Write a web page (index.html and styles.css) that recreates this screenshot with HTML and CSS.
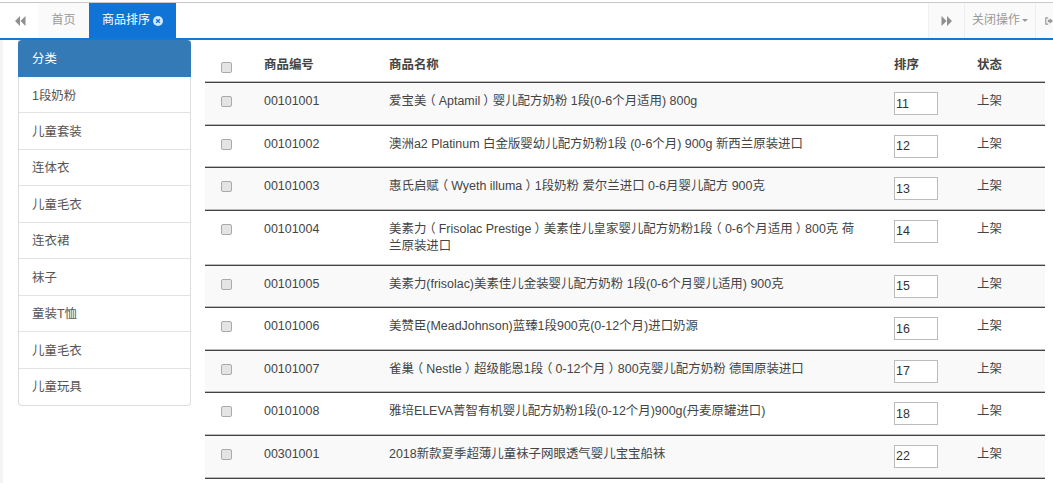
FILE: index.html
```html
<!DOCTYPE html>
<html lang="zh">
<head>
<meta charset="utf-8">
<title>商品排序</title>
<link rel="stylesheet" href="styles.css">
</head>
<body>
<header class="tabbar">
  <button class="tb-btn tb-left"><svg width="12" height="10" viewBox="0 0 12 10"><path d="M6 0v10L1 5zM11.500 0v10L6.500 5z" fill="#8f8f8f"/></svg></button>
  <a class="tab">首页</a>
  <a class="tab tab-active">商品排序<svg class="tab-close" width="10" height="10" viewBox="0 0 10 10"><circle cx="5" cy="5" r="5" fill="#d6e6f5"/><path d="M3.200 3.200l3.600 3.600M6.800 3.200l-3.600 3.600" stroke="#0f74d6" stroke-width="1.400"/></svg></a>
  <div class="tab-spacer"></div>
  <button class="tb-btn tb-right"><svg width="12" height="10" viewBox="0 0 12 10"><path d="M0.500 0v10L5.500 5zM6 0v10l5-5z" fill="#8f8f8f"/></svg></button>
  <button class="tb-btn tb-close">关闭操作<span class="caret"></span></button>
  <button class="tb-btn tb-exit"><svg width="10" height="10" viewBox="0 0 10 10"><path d="M4 1H1v8h3" fill="none" stroke="#999" stroke-width="1.500"/><path d="M3.500 3.500H6V1.500L10 5 6 8.500v-2H3.500z" fill="#999"/></svg></button>
</header>
<main class="content">
  <nav class="side">
    <div class="side-head">分类</div>
    <a class="side-item">1段奶粉</a>
    <a class="side-item">儿童套装</a>
    <a class="side-item">连体衣</a>
    <a class="side-item">儿童毛衣</a>
    <a class="side-item">连衣裙</a>
    <a class="side-item">袜子</a>
    <a class="side-item">童装T恤</a>
    <a class="side-item">儿童毛衣</a>
    <a class="side-item">儿童玩具</a>
  </nav>
  <table class="goods">
    <colgroup><col class="c-check"><col class="c-code"><col class="c-name"><col class="c-sort"><col class="c-state"></colgroup>
    <thead>
      <tr><th class="cell-check"><input type="checkbox"></th><th>商品编号</th><th>商品名称</th><th>排序</th><th>状态</th></tr>
    </thead>
    <tbody>
      <tr class="odd"><td class="cell-check"><input type="checkbox"></td><td>00101001</td><td class="cell-name">爱宝美<span class="fw">（</span>Aptamil<span class="fw">）</span>婴儿配方奶粉 1段(0-6个月适用) 800g</td><td class="cell-sort"><input class="sort" type="text" value="11"></td><td>上架</td></tr>
      <tr><td class="cell-check"><input type="checkbox"></td><td>00101002</td><td class="cell-name">澳洲a2 Platinum 白金版婴幼儿配方奶粉1段 (0-6个月) 900g 新西兰原装进口</td><td class="cell-sort"><input class="sort" type="text" value="12"></td><td>上架</td></tr>
      <tr class="odd"><td class="cell-check"><input type="checkbox"></td><td>00101003</td><td class="cell-name">惠氏启赋<span class="fw">（</span>Wyeth illuma<span class="fw">）</span>1段奶粉 爱尔兰进口 0-6月婴儿配方 900克</td><td class="cell-sort"><input class="sort" type="text" value="13"></td><td>上架</td></tr>
      <tr><td class="cell-check"><input type="checkbox"></td><td>00101004</td><td class="cell-name cell-wrap">美素力<span class="fw">（</span>Frisolac Prestige<span class="fw">）</span>美素佳儿皇家婴儿配方奶粉1段<span class="fw">（</span>0-6个月适用<span class="fw">）</span>800克 荷兰原装进口</td><td class="cell-sort"><input class="sort" type="text" value="14"></td><td>上架</td></tr>
      <tr class="odd"><td class="cell-check"><input type="checkbox"></td><td>00101005</td><td class="cell-name">美素力(frisolac)美素佳儿金装婴儿配方奶粉 1段(0-6个月婴儿适用) 900克</td><td class="cell-sort"><input class="sort" type="text" value="15"></td><td>上架</td></tr>
      <tr><td class="cell-check"><input type="checkbox"></td><td>00101006</td><td class="cell-name">美赞臣(MeadJohnson)蓝臻1段900克(0-12个月)进口奶源</td><td class="cell-sort"><input class="sort" type="text" value="16"></td><td>上架</td></tr>
      <tr class="odd"><td class="cell-check"><input type="checkbox"></td><td>00101007</td><td class="cell-name">雀巢<span class="fw">（</span>Nestle<span class="fw">）</span>超级能恩1段<span class="fw">（</span>0-12个月<span class="fw">）</span>800克婴儿配方奶粉 德国原装进口</td><td class="cell-sort"><input class="sort" type="text" value="17"></td><td>上架</td></tr>
      <tr><td class="cell-check"><input type="checkbox"></td><td>00101008</td><td class="cell-name">雅培ELEVA菁智有机婴儿配方奶粉1段(0-12个月)900g(丹麦原罐进口)</td><td class="cell-sort"><input class="sort" type="text" value="18"></td><td>上架</td></tr>
      <tr class="odd row-last"><td class="cell-check"><input type="checkbox"></td><td>00301001</td><td class="cell-name">2018新款夏季超薄儿童袜子网眼透气婴儿宝宝船袜</td><td class="cell-sort"><input class="sort" type="text" value="22"></td><td>上架</td></tr>
    </tbody>
  </table>
</main>
</body>
</html>
```
FILE: styles.css
```css
* { box-sizing: border-box; }
html, body { margin: 0; padding: 0; height: 483px; overflow: hidden; background: #fff; }
body {
  font-family: "Liberation Sans", "Noto Sans CJK SC", sans-serif;
  font-size: 12.450px;
  line-height: 17px;
  color: #555;
  padding-top: 2px;
}
.tabbar {
  display: flex;
  height: 38px;
  background: #fafafa;
  border-top: 1px solid #c8c8c8;
  border-bottom: 2px solid #1377d4;
  align-items: stretch;
}
.tb-btn {
  border: 0;
  background: #fafafa;
  padding: 0;
  font: inherit;
  color: #999;
  display: flex;
  align-items: center;
  justify-content: center;
}
.tb-left { width: 38px; background: #fff; padding-left: 1px; }
.tb-right { width: 36px; border-left: 1px solid #f0f0f0; }
.tb-close { width: 71px; border-left: 1px solid #eee; font-size: 12px; }
.tb-exit { width: 18px; border-left: 1px solid #eee; justify-content: flex-start; padding-left: 9px; }
.tab {
  width: 51px;
  color: #999;
  display: flex;
  align-items: center;
  justify-content: center;
  background: #fafafa;
  font-size: 12px;
}
.tab-active {
  width: 87px;
  color: #fff;
  background: #0f74d6;
  justify-content: flex-start;
  padding-left: 13px;
}
.tab-close { margin-left: 3px; }
.tab-spacer { flex: 1; background: #fff; }
.caret {
  width: 0; height: 0;
  margin-left: 2px;
  border-left: 3px solid transparent;
  border-right: 3px solid transparent;
  border-top: 3px solid #999;
}
.content {
  display: flex;
  align-items: flex-start;
  padding: 0 8px 0 15px;
  border-left: 3px solid #f4f4f4;
  height: 443px;
}
.side {
  width: 173px;
  display: flex;
  flex-direction: column;
  border: 1px solid #ddd;
  border-top: 0;
  border-radius: 0 0 4px 4px;
  background: #fff;
}
.side-head {
  margin: 0 -1px;
  height: 37px;
  padding: 11px 14px;
  color: #fff;
  background: #337ab7;
  border-radius: 4px 4px 0 0;
}
.side-item {
  height: 36.440px;
  padding: 10.500px 13px 0;
  color: #555;
  border-bottom: 1px solid #e2e2e2;
}
.side-item:last-child { border-bottom: 0; }
.goods {
  margin-left: 14px;
  width: 840px;
  table-layout: fixed;
  border-collapse: separate;
  border-spacing: 0;
  color: #444;
}
.c-check { width: 51px; }
.c-code { width: 125px; }
.c-name { width: 505px; }
.c-sort { width: 83px; }
.c-state { width: 76px; }
.goods th {
  height: 43px;
  padding: 17px 8px 0;
  vertical-align: top;
  text-align: left;
  font-weight: bold;
  border-bottom: 1px solid #444;
  box-shadow: inset 0 -1px 0 #bbb;
}
.goods td {
  height: 42.550px;
  padding: 10px 8px 0;
  vertical-align: top;
  border-bottom: 1px solid #444;
  box-shadow: inset 0 -1px 0 #bbb;
}
.odd td { background: #f9f9f9; }
.goods .row-last td { height: 43.500px; }
.goods .cell-name { padding-right: 25px; }
.goods .cell-wrap { height: 55px; }
.goods .cell-sort { padding-top: 9px; }
.fw {
  padding: 0 0.25em;
  font-feature-settings: "halt";
}
.goods input[type="checkbox"] {
  appearance: none;
  width: 11px;
  height: 11px;
  margin: 3px 0 0 7.500px;
  border: 1px solid #aaa;
  border-radius: 2px;
  background: #e4e4e4;
  display: block;
}
.goods th input[type="checkbox"] { margin-top: 5px; }
.goods .sort {
  display: block;
  width: 44px;
  height: 23px;
  padding: 0 1px;
  border: 1px solid #bbb;
  font: inherit;
  color: #333;
  background: #fff;
}
```
